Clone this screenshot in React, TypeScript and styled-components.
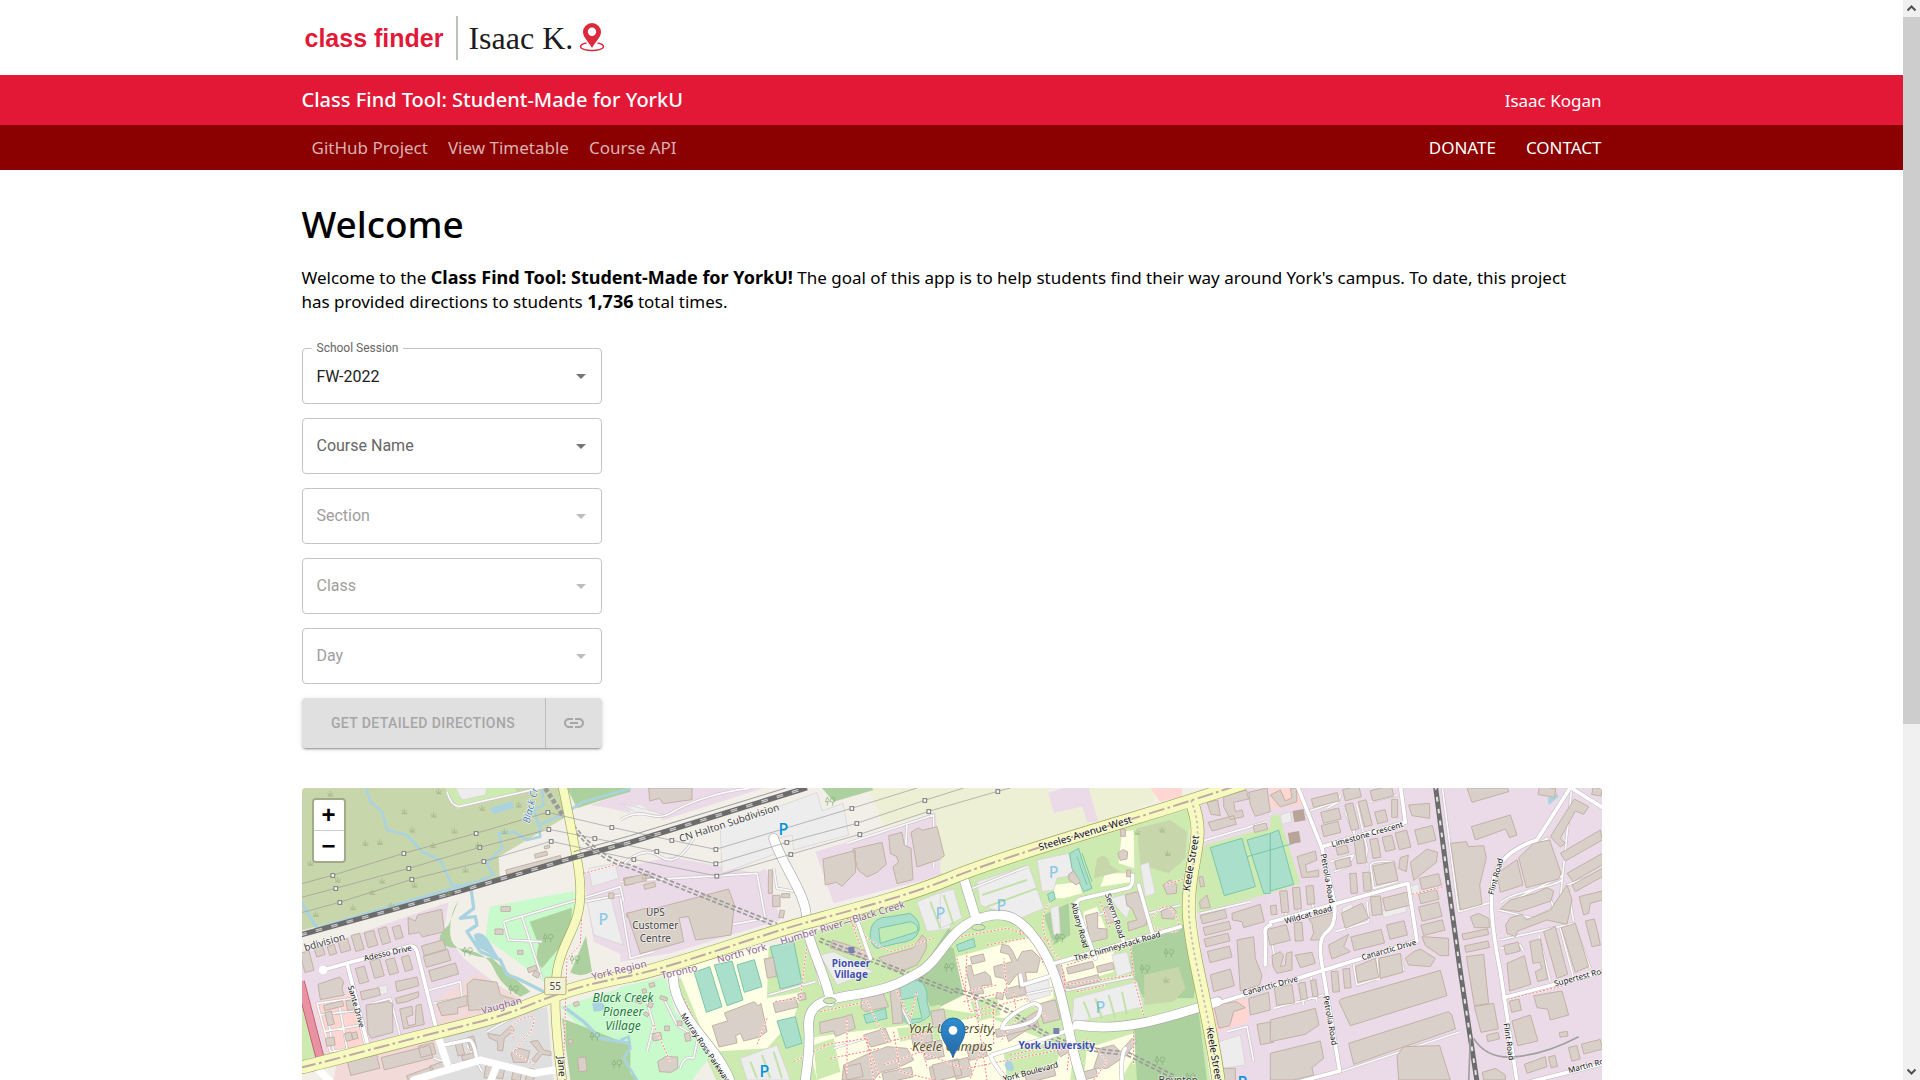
import React from "react";
import styled, { createGlobalStyle } from "styled-components";

const Global = createGlobalStyle`
  *, *::before, *::after { box-sizing: border-box; }
  body { margin: 0; background: #fff; color: #000; font-family: "Noto Sans", "Open Sans", sans-serif; }
`;

const Shell = styled.div`
  display: grid;
  grid-template-columns: minmax(0, 1fr) 17px;
  height: 100vh;
`;
const Page = styled.div`
  overflow: hidden;
`;
const Container = styled.div`
  display: flex;
  align-items: center;
  width: calc(100% - 32px);
  max-width: 1300px;
  height: 100%;
  margin: 0 auto;
`;

/* Scroll bar */
const ScrollTrack = styled.div`
  display: flex;
  flex-direction: column;
  background: #f0f0f0;
`;
const ScrollThumb = styled.div`
  height: 707px;
  margin-bottom: auto;
  background: #cdcdcd;
`;
const ScrollArrow = styled.svg`
  width: 17px;
  height: 17px;
  fill: none;
  stroke: #505050;
  stroke-width: 2;
`;

/* Header */
const LogoBar = styled.header`
  height: 75px;
`;
const Logo = styled.a`
  display: flex;
  align-items: center;
  gap: 10px;
  padding-left: 3px;
  color: #1c1c1c;
  text-decoration: none;
`;
const LogoName = styled.span`
  padding-right: 3px;
  color: #e31837;
  font: bold 25px/32px "Liberation Sans", Arial, sans-serif;
`;
const LogoRule = styled.span`
  width: 2px;
  height: 44px;
  background: #b9c4b6;
`;
const LogoAuthor = styled.span`
  font: 32px/36px "Liberation Serif", "Times New Roman", serif;
`;
const LogoPin = styled.svg`
  width: 26px;
  height: 30px;
  margin-left: -4px;
`;
const TitleBar = styled.div`
  height: 50px;
  background: #e31837;
  color: #fff;
`;
const SiteTitle = styled.span`
  margin-right: auto;
  font-size: 20px;
  font-weight: 500;
  line-height: 28px;
`;
const Owner = styled.a`
  color: #fff;
  font-size: 17px;
  text-decoration: none;
`;
const NavBar = styled.nav`
  height: 45px;
  background: #8b0000;
`;
const NavGroup = styled.div<{ $end?: boolean }>`
  display: flex;
  gap: ${(p) => (p.$end ? 30 : 20)}px;
  ${(p) => (p.$end ? "margin-left: auto;" : "padding-left: 10px;")}
`;
const NavLink = styled.a<{ $bright?: boolean }>`
  color: ${(p) => (p.$bright ? "#fff" : "#dcb0b0")};
  font-size: 17px;
  line-height: 24px;
  text-decoration: none;
`;

/* Content */
const Main = styled.main`
  width: calc(100% - 32px);
  max-width: 1300px;
  margin: 0 auto;
  padding-top: 30px;
`;
const Heading = styled.h1`
  margin: 0;
  font-size: 37px;
  font-weight: 500;
  line-height: 48px;
`;
const Intro = styled.p`
  margin: 18px 0 34px;
  padding-right: 24px;
  font-size: 17px;
  line-height: 24px;
  b { font-size: 18px; line-height: 20px; }
`;
const Form = styled.form`
  display: flex;
  flex-direction: column;
  gap: 14px;
  width: 300px;
  font-family: Roboto, sans-serif;
`;
const Field = styled.div`
  position: relative;
  height: 56px;
`;
const Select = styled.select`
  width: 100%;
  height: 100%;
  padding: 2px 40px 0 14px;
  border: 1px solid #c4c4c4;
  border-radius: 4px;
  appearance: none;
  background: #fff;
  color: #212121;
  font: 16px/24px Roboto, sans-serif;
  opacity: 1;
`;
const FieldLabel = styled.label<{ $floating?: boolean; $off?: boolean }>`
  position: absolute;
  top: ${(p) => (p.$floating ? -8 : 16)}px;
  left: ${(p) => (p.$floating ? 10 : 15)}px;
  padding: 0 ${(p) => (p.$floating ? 5 : 0)}px;
  background: #fff;
  color: ${(p) => (p.$off ? "#9e9e9e" : "#666")};
  font-size: ${(p) => (p.$floating ? 12 : 16)}px;
  line-height: ${(p) => (p.$floating ? 16 : 24)}px;
  pointer-events: none;
`;
const Caret = styled.svg<{ $off?: boolean }>`
  position: absolute;
  top: 16px;
  right: 9px;
  width: 24px;
  height: 24px;
  fill: ${(p) => (p.$off ? "#bdbdbd" : "#757575")};
  pointer-events: none;
`;
const ButtonGroup = styled.div`
  display: flex;
  height: 50px;
  border-radius: 4px;
  background: #e0e0e0;
  box-shadow: 0 3px 1px -2px rgba(0,0,0,.2), 0 2px 2px 0 rgba(0,0,0,.14), 0 1px 5px 0 rgba(0,0,0,.12);
`;
const GroupButton = styled.button<{ $wide?: boolean }>`
  display: flex;
  align-items: center;
  justify-content: center;
  flex: ${(p) => (p.$wide ? "1" : "0 0 56px")};
  padding: 0;
  border: 0;
  border-right: ${(p) => (p.$wide ? "1px solid #bdbdbd" : "0")};
  background: none;
  color: #a6a6a6;
  font: 500 14px/24px Roboto, sans-serif;
  letter-spacing: 0.02857em;
  text-transform: uppercase;
  svg { width: 24px; height: 24px; fill: currentColor; }
`;

/* Map */
const MapFrame = styled.section`
  position: relative;
  margin-top: 40px;
  border-radius: 4px 4px 0 0;
  overflow: hidden;
`;
const MapDrawing = styled.svg`
  display: block;
  width: 100%;
  height: auto;
  font-family: "Noto Sans", sans-serif;
`;
const ZoomControl = styled.div`
  position: absolute;
  top: 10px;
  left: 10px;
  border: 2px solid rgba(0, 0, 0, 0.2);
  border-radius: 4px;
  background-clip: padding-box;
`;
const ZoomButton = styled.button`
  display: block;
  width: 30px;
  height: 30px;
  padding: 0;
  border: 0;
  border-radius: 2px 2px 0 0;
  background: #fff;
  color: #000;
  font: bold 24px/30px "Liberation Sans", Arial, sans-serif;
  & + & { height: 31px; border-top: 1px solid #ccc; border-radius: 0 0 2px 2px; }
`;

/* The map is drawn in four side-by-side sheets; each layer lists one path per sheet. */
const SHEETS = [0, 960, 1920, 2910];

function Layer({ d, ...rest }: { d: string[] } & Omit<React.SVGProps<SVGGElement>, "d">) {
  return (
    <g {...rest}>
      {d.map((path, i) => (path ? <path key={i} d={path} transform={`translate(${SHEETS[i]})`} /> : null))}
    </g>
  );
}

/* centre x, centre y, width, height, rotation */
type Block = [number, number, number, number, number];
const block = ([cx, cy, w, h, a]: Block) => {
  const r = (a * Math.PI) / 180;
  const c = Math.cos(r);
  const s = Math.sin(r);
  const p = [[-w, -h], [w, -h], [w, h], [-w, h]].map(
    ([x, y]) => `${(cx + (x * c - y * s) / 2).toFixed(1)},${(cy + (x * s + y * c) / 2).toFixed(1)}`
  );
  return `M${p.join("L")}Z`;
};
const blocks = (list: Block[]) => list.map(block).join("");

const BUILDINGS = [
  "M323,398L345,408 352,390 424,373 432,440 366,456 357,442 325,448Z M53,598L118,576 130,590 125,612 132,630 60,644Z M500,598L520,582 590,592 600,630 660,648 600,662 588,672 505,676Z M410,655L500,632 500,662 472,668 472,686 424,692Z M197,660L262,650 276,655 278,742 213,760 203,745Z M298,672L335,664 338,690 318,696 324,722 345,718 347,662 362,657 372,718 310,732Z M562,745L600,752 632,722 642,736 612,760 607,798 592,796 592,770 566,758Z M690,770L712,766 730,795 752,800 752,812 725,808 706,832 695,824 715,800Z M632,805L655,790 688,798 680,832 640,832Z M180,620L236,608 240,630 185,645Z M285,590L350,576 356,602 290,620Z M285,640L355,620 355,636 320,650 290,656Z" +
    blocks([[20,530,28,60,-14],[58,500,26,26,-16],[95,495,22,28,-16],[132,482,30,36,-16],[172,472,26,50,-16],[212,462,30,46,-16],[252,452,26,48,-16],[292,442,24,38,-16],[185,570,28,48,-16],[230,550,30,54,-16],[275,544,28,46,-16],[320,535,24,44,-16],[400,488,68,30,-16],[410,520,76,34,-16],[430,562,84,34,-16],[100,662,58,16,-14],[150,660,22,30,-10],[88,700,20,40,-14],[90,770,26,24,-10],[145,755,20,24,-14],[163,752,16,20,-14],[320,818,150,38,-14],[190,840,90,42,-14],[380,795,46,34,-14],[420,845,60,24,-20],[360,868,80,20,-20],[478,790,20,42,-14],[515,775,20,40,-14],[505,815,40,16,-14],[565,860,22,40,10],[600,860,22,40,10],[650,866,26,40,10],[690,870,24,38,10],[700,240,170,14,-15],[722,209,38,12,-15],[740,186,16,8,-15],[616,372,28,14,0],[596,440,24,16,0],[660,502,16,12,0],[696,552,28,14,-20],[708,568,18,16,30],[933,332,16,16,0],[985,288,28,22,-10],[986,390,14,12,0],[846,838,24,42,-6],[810,770,12,12,0],[828,657,16,12,-20]]),
  "M85,9L215,9 215,44 128,56 118,40 88,48Z M20,385L85,368 98,372 325,312 342,360 332,450 226,465 205,395 176,398 190,470 60,506Z M608,222L705,196 705,262 665,304 648,292 615,300Z M698,192L785,172 798,238 770,262 740,276 712,254Z M805,152L845,142 852,180 872,190 878,284 830,296 818,245 835,232 828,214 810,206Z M872,142L895,128 905,136 950,125 972,212 960,222 890,246Z M276,722L322,708 312,684 402,650 414,662 422,655 440,740 418,756 370,768 360,745 346,752 350,774 296,786Z M598,712L668,696 695,688 705,730 646,755 640,738 600,746Z M775,518L880,488 905,450 918,462 918,490 905,515 890,540 840,560 800,545Z M112,830L135,815 172,816 172,850 152,862 118,860Z M724,640L785,618 805,665 735,680 722,668Z M730,750L795,730 812,770 752,786Z M670,840L740,808 800,785 860,790 880,825 830,850 780,862 760,885 665,885Z" +
    blocks([[45,284,64,20,-14],[78,275,24,10,-14],[88,302,34,14,-14],[450,290,12,70,0],[468,348,22,34,0],[484,387,14,22,10],[496,332,24,12,0],[450,548,28,58,-10],[496,660,70,30,-14],[545,635,22,20,-10],[690,495,120,24,18],[95,600,16,12,-15],[72,618,12,12,-15],[55,648,20,12,20],[90,660,14,14,20],[130,640,22,10,20],[160,620,16,12,30],[202,756,16,24,-10],[110,755,26,22,-10],[140,730,14,14,0],[178,715,14,14,0],[78,688,14,10,30],[828,660,30,110,-5],[955,700,40,50,-10],[938,795,60,50,-10],[905,760,60,34,-12],[832,870,90,30,-12],[700,860,50,40,-12],[960,860,60,40,-12]]),
  "M160,545L215,530 205,508 180,502 185,478 205,482 218,500 230,528 245,500 275,495 300,520 290,562 255,562 262,600 238,610 232,565 205,600 190,580 165,575Z M75,545L92,540 100,572 135,560 150,575 155,600 125,602 130,625 95,630Z M800,52L832,45 840,92 812,88Z M850,35L918,15 925,42 880,52 885,80 905,75 910,95 870,104 850,65Z M925,22L980,9 990,80 945,94 930,60Z M803,112L880,92 888,118 815,138Z M875,385L960,358 972,410 910,428 905,410 876,405Z M890,465L940,455 945,520 965,570 958,600 900,618Z M810,570L870,552 882,602 820,620Z M820,660L888,650 915,668 880,680 868,722 836,730Z M925,640L985,622 990,675 930,690Z M435,392L472,382 472,430 500,432 500,460 450,472Z M555,330L592,320 620,390 618,420 565,438 562,412 590,405 575,370 560,362Z M532,205L548,194 562,200 560,222 540,226Z M668,300L690,285 710,300 708,325 680,328Z M662,378L695,365 708,380 700,402 665,400Z M195,740L270,690 300,672 290,715 205,770Z M385,268L400,258 420,290 408,300 386,285Z M480,790L520,780 540,800 575,760 590,765 560,810 500,850 460,850Z M778,350L800,330 810,368 780,370Z" +
    blocks([[548,143,14,22,0],[565,265,12,20,0],[784,290,12,30,-10],[820,395,76,26,-14],[830,430,80,24,-14],[830,465,74,24,-14],[838,508,68,34,-14],[960,128,40,20,-14],[420,548,80,20,-14],[495,548,50,20,-14],[430,590,95,20,-14],[362,575,20,75,-14],[112,522,40,22,-14],[225,620,60,30,-14],[327,680,52,60,-14],[178,633,22,18,10],[230,730,130,24,-14],[110,800,55,40,-14],[20,855,80,50,-14],[65,850,50,55,-14],[505,390,22,50,-14],[375,790,50,30,-30],[300,870,90,26,-14],[440,870,60,24,-14],[975,745,40,62,-10],[860,870,50,40,0]]),
  "M0,30L30,15 45,48 65,38 60,10 78,9 80,50 30,66Z M80,215L135,198 140,225 105,240 110,262 145,255 145,275 95,278Z M420,232L470,192 502,202 498,232 430,286Z M390,218L414,210 408,260 385,250Z M415,60L478,55 478,100 425,92Z M590,9L712,9 715,20 605,52Z M603,125L720,90 740,150 718,158 705,132 615,165Z M541,175L588,170 595,185 640,182 648,218 628,300 635,358 570,375Z M680,265L740,224 758,300 690,322Z M745,218L790,175 838,165 872,265 865,282 768,308Z M690,372L720,345 795,325 830,308 850,318 842,348 745,380Z M706,420L720,398 755,388 768,405 840,375 890,300 905,345 890,418 830,405 742,438 735,455 710,445Z M840,155L912,42 955,65 940,88 915,78 870,160 885,175 870,186Z M870,205L990,135 996,165 885,228Z M890,265L996,205 996,240 908,290Z M905,300L996,250 996,275 915,320Z M926,335L996,318 996,345 960,355 955,385 940,390Z M5,512L30,500 40,512 30,545 45,540 48,505 65,500 65,555 20,565 8,545Z M75,510L125,502 135,535 90,548Z M115,402L188,382 185,415 150,465 120,465 130,445 125,415Z M175,480L235,448 220,485 240,500 185,522 178,500Z M213,385L275,355 290,385 295,400 225,430Z M212,642L510,556 530,632 240,722 206,650Z M235,775L535,680 545,690 555,732 250,838Z M0,705L135,670 146,720 105,748 0,770Z M0,805L150,768 160,820 125,848 130,870 70,885 0,885Z M380,812L400,785 508,782 540,885 385,885Z M455,455L535,460 535,512 510,512 465,482Z M405,520L430,500 450,492 495,520 480,545 415,540Z M588,515L640,508 655,655 612,662Z M612,665L670,655 684,732 632,742Z M600,395L625,385 655,400 658,428 612,428Z M778,470L810,462 832,582 802,590 795,560 815,550 808,532 788,535Z M820,440L855,425 892,568 860,580Z M873,428L915,415 955,545 915,562Z M710,535L762,512 782,598 718,618Z M725,708L780,690 803,768 742,782Z M790,632L875,618 895,690 840,705 832,672 800,668Z M762,838L825,815 830,845 770,865Z M636,862L675,850 705,870 705,885 640,885Z M255,545L315,520 325,578 262,592Z M326,520L390,505 398,562 330,580Z M945,408L972,402 982,440 990,480 965,485Z" +
    blocks([[165,45,80,26,-14],[182,92,55,34,-14],[182,132,52,34,-14],[245,95,24,80,-14],[285,85,24,78,-14],[333,95,32,36,-14],[373,70,18,54,0],[245,25,50,34,-14],[335,25,65,32,-14],[465,150,55,45,-14],[398,165,36,52,-14],[355,175,30,44,-14],[315,190,24,58,-10],[270,200,28,70,-8],[216,195,34,24,-14],[218,235,46,26,-14],[250,295,20,60,-4],[290,290,22,56,-4],[345,265,65,58,-12],[480,290,60,35,-14],[475,335,56,30,-14],[480,380,62,44,-14],[488,428,66,32,-14],[318,362,30,56,-6],[378,350,76,40,-14],[292,465,94,42,-14],[380,435,54,44,-14],[42,350,22,65,-5],[80,340,22,65,-5],[120,330,22,55,-5],[10,375,18,28,-5],[85,440,24,56,-4],[24,450,62,48,-14],[195,590,20,62,-5],[230,580,20,58,-5],[42,630,54,55,-8],[98,618,20,50,-8],[132,610,16,50,-8],[615,448,78,18,-12],[620,485,72,20,-12],[735,662,30,34,-12],[668,756,36,20,-14],[880,748,24,14,-8],[848,830,20,34,-14],[912,805,26,42,-14],[965,785,58,30,-14],[725,490,44,28,-14],[830,20,50,26,10],[980,20,28,22,10]]),
];

const SCRUB: number[][] = [[90,27],[415,20],[545,70],[655,60],[312,80],[400,90],[462,138],[335,135],[195,175],[238,172],[398,182],[495,255],[30,235],[112,285],[245,288],[342,300],[445,325],[215,322],[46,388],[158,368],[272,362],[612,140],[532,180],[2510,142],[2585,135],[2602,205],[2597,585]];
const PYLONS: number[][] = [[97,271],[310,205],[527,145],[742,82],[934,127],[106,310],[325,250],[538,187],[745,133],[883,160],[118,352],[334,283],[550,229],[752,169],[1114,166],[1246,193],[1654,70],[1069,199],[1246,236],[1459,172],[1669,115],[1873,46],[1000,223],[1249,273],[1471,208],[1678,148],[1885,79],[2092,19]];
const TREES: number[][] = [[742,460],[822,525],[500,500],[638,615],[882,755],[948,838],[1588,50],[2277,460],[2604,505],[2532,553],[2577,828],[1945,548],[2668,878]];

const RAIL_HALTON = "M0,450L480,318 820,218 990,172 1520,8";
const RAIL_EAST = "M3405,0L3440,270 3480,560 3530,890";
const STEELES = "M0,848C60,835 220,790 400,745S600,695 700,655S860,598 990,572S1380,450 1520,412S1830,330 1950,280S2400,130 2500,100S2740,25 2830,-5";
const KEELE = "M2672,45C2705,130 2690,170 2675,260S2660,400 2690,545S2740,780 2755,890";
const JANE = "M786,0C800,60 812,130 824,190S850,330 830,395S780,490 770,560S768,760 786,890";
const WHITE_MAJOR = "M1420,160C1445,240 1520,330 1518,400S1580,570 1590,650M2752,650C2620,690 2480,745 2330,720M1515,885C1520,840 1530,800 1525,730S1560,645 1660,630S1800,595 1860,560S1940,440 2025,405S2165,390 2230,500S2300,760 2345,890M1990,280L2030,410M1118,570C1120,620 1135,650 1160,695S1260,810 1290,890";
const WHITE_ROADS = "M68,555L140,535 330,483Q345,483 350,500L410,740 440,840M140,535L205,790M430,780L505,765Q520,765 530,825M2640,425L2245,540M2330,360Q2325,345 2350,340L2480,310Q2500,305 2497,270M2515,300L2555,440M2325,355L2385,520M2420,330L2470,470M2752,655L3350,468 3323,295 2910,412M2990,0L3065,190 3102,350Q3110,420 3080,440T3065,540L3118,858 2960,900M3065,185L3315,112 3300,0M3815,0L3710,165Q3600,200 3580,280T3600,560L3650,890M3610,638L3910,560M3690,890L3910,835M3815,10L3910,70M2895,540V450Q2890,425 2910,420M2115,880Q2060,810 2075,810L2250,755 2345,720M2105,730Q2115,690 2200,655Q2230,660 2215,690T2110,730M2160,570L2165,600 2245,575M2465,885Q2460,810 2475,790M1665,390L1710,520";
const SERVICE = "M440,20Q450,60 475,65L760,0M855,350L960,330M610,410L880,330 960,305 970,350M610,410L625,465 725,470M665,395L725,580M50,655L160,640 195,785 90,800ZM60,690L180,675M70,740L180,720M75,655L100,800M115,650L140,790M215,655L270,640 300,755 225,780M370,620L480,590 485,640 400,655M560,740L650,690M400,820L490,850M500,780L545,860M960,105C1030,60 1060,115 1110,85S1250,20 1350,10M960,290L1370,265 1395,400 1180,440M965,240Q1030,180 1080,215T1180,160M960,340L990,520 1060,500M1420,250L1430,310 1490,320M1640,175L1900,90 1900,250M1820,120L1810,290M1405,630L1545,590M1530,480L1560,600M1770,600L1830,720M1600,790L1710,755M1090,640L1130,720 1210,770M1040,650L1060,720 1040,800M1140,850Q1150,810 1180,820L1190,770M1990,320L2180,245M2010,560L2040,700M2120,640L2260,610M2280,620L2500,575M2365,400L2420,380M2525,390L2640,360M2700,385L2850,350M2700,170L2900,110M2780,740L2840,725 2860,830M2910,450L2930,550M3080,70L3115,50 3120,30M3020,80L3110,50M3135,80L3200,240M3210,50L3290,30M3150,90L3180,220Q3200,230 3200,190L3170,60M3100,260L3140,245 3160,210 3090,230M3210,240Q3220,225 3280,230L3290,290 3220,310ZM3200,350L3205,410 3105,440M2940,320L2960,400M2980,310L3000,390M3020,300L3040,370M3160,540L3170,600 3310,555 3300,510M3230,520L3235,585M2990,575L3010,660M3030,570L3050,650M2920,670L3070,630M3425,0L3475,380 3580,350M3600,355C3620,330 3680,320 3750,300S3770,280 3750,210L3690,190 3740,160 3780,275 3650,340M3595,375L3700,400 3760,370 3740,310M3600,465L3820,415 3870,550M3715,450L3750,590M3780,430L3820,580M3600,490L3660,480 3670,500M3820,410L3800,300 3910,260M3815,0L3780,340M3120,860L3480,740";
const FOOTPATHS = "M850,265L960,235M850,260L840,480 800,520 790,830M200,790L560,700 700,660M640,760Q620,720 670,700T690,740L640,800 700,840M1540,410L1650,400 1700,540M1560,680L1700,650 1760,770 1900,740M1640,400Q1700,470 1770,500L1900,460M1570,780L1700,760 1720,885M1480,830L1580,780M1150,640L1210,760 1300,885M1060,720L1110,830M1950,460L2120,430 2260,470M1970,520L2010,680 2180,640M1990,650L2120,620 2110,520M2250,350Q2200,420 2260,500T2250,620M2290,600L2500,570 2490,480M2300,540L2520,470M2500,580L2530,690M2020,620L2060,885M2130,810L2310,770 2300,860M2000,850L2300,790M2400,350L2430,430M2555,400Q2600,330 2630,400T2545,420M2590,300L2660,280M3325,330L3430,305M3610,650L3620,700M3610,645L3800,600M2500,740L2500,840M1830,790L1990,850M1850,620L1830,700 1780,600M1690,750L1740,880M1750,840L1920,780M1640,700L1640,870M1590,820L1740,790M1780,740L1800,860 1900,885M1860,740L1880,850M2000,500L1995,620 2090,600M2060,480L2200,455 2230,540M2140,620L2150,700 2100,770M2180,640L2240,700M2080,650L2080,780M2000,700L2090,680M2010,880L2050,770M2330,620L2420,600M2290,560L2295,620M1520,480L1500,640 1420,650M1400,700L1370,780M2360,760L2420,830 2380,885M2160,400V450";
const GREY_SUBWAY = "M820,120Q900,220 990,240L1430,415M1560,460L1960,615M1965,610Q2100,650 2200,720T2480,800L2620,870";

type Kind = "street" | "avenue" | "admin" | "park" | "campus" | "transit" | "place" | "parking";
const LABEL_STYLE: Record<Kind, [string, number]> = {
  street: ["#111", 24],
  avenue: ["#111", 30],
  admin: ["#8d618b", 30],
  park: ["#1b7a3c", 36],
  campus: ["#5a5325", 39],
  transit: ["#3f4fae", 30],
  place: ["#444", 30],
  parking: ["#0092da", 48],
};
const Label = styled.text<{ $kind: Kind }>`
  fill: ${(p) => LABEL_STYLE[p.$kind][0]};
  font-size: ${(p) => LABEL_STYLE[p.$kind][1]}px;
  font-style: ${(p) => (p.$kind === "park" || p.$kind === "campus" ? "italic" : "normal")};
  font-weight: ${(p) => (p.$kind === "transit" ? 700 : p.$kind === "parking" ? 500 : 400)};
  stroke: rgba(255, 255, 255, 0.6);
  stroke-width: ${(p) => (p.$kind === "parking" ? 0 : 5)}px;
  stroke-linejoin: round;
  paint-order: stroke;
  text-anchor: middle;
  dominant-baseline: central;
`;

const LABELS: [string, number, number, number, Kind][] = [
  ["Adesso Drive", 262, 502, -13, "street"], ["Sante Drive", 170, 664, 74, "street"], ["bdivision", 72, 470, -16, "place"],
  ["Vaughan", 603, 660, -15, "admin"], ["York Region", 956, 554, -14, "admin"], ["Toronto", 1136, 558, -13, "admin"],
  ["North York", 1324, 503, -15, "admin"], ["Humber River—Black Creek", 1626, 412, -17, "admin"],
  ["CN Halton Subdivision", 1286, 112, -18, "place"], ["UPS", 1065, 381, 0, "place"], ["Customer", 1065, 419, 0, "place"], ["Centre", 1065, 458, 0, "place"],
  ["Black Creek", 968, 636, 0, "park"], ["Pioneer", 968, 678, 0, "park"], ["Village", 968, 721, 0, "park"],
  ["Pioneer", 1652, 533, 0, "transit"], ["Village", 1652, 568, 0, "transit"], ["York University", 2269, 779, 0, "transit"],
  ["York University,", 1956, 730, 0, "campus"], ["Keele Campus", 1956, 782, 0, "campus"],
  ["Murray Ross Parkway", 1216, 786, 56, "street"], ["Jane Street", 789, 890, 86, "avenue"],
  ["Steeles Avenue West", 2354, 143, -17, "avenue"], ["Keele Street", 2670, 234, -80, "avenue"], ["Keele Street", 2744, 810, 80, "avenue"],
  ["Albany Road", 2340, 420, 74, "street"], ["Severn Road", 2446, 392, 72, "street"], ["The Chimneystack Road", 2450, 482, -16, "street"],
  ["York Boulevard", 2190, 858, -15, "street"], ["Boynton", 2634, 884, 0, "place"],
  ["Limestone Crescent", 3200, 146, -16, "street"], ["Petrolia Road", 3084, 280, 80, "street"], ["Petrolia Road", 3092, 706, 80, "street"],
  ["Wildcat Road", 3023, 387, -16, "street"], ["Canarctic Drive", 3265, 492, -16, "street"], ["Canarctic Drive", 2909, 600, -15, "street"],
  ["Flint Road", 3584, 274, -75, "street"], ["Flint Road", 3628, 770, 82, "street"], ["Supertest Road", 3845, 572, -15, "street"], ["Martin Ross", 3868, 837, -15, "street"],
  ["P", 1449, 132, 0, "parking"], ["P", 1392, 858, 0, "parking"], ["P", 2826, 892, 0, "parking"],
];
const FADED_P: number[][] = [[909,402],[1920,384],[2260,262],[2103,360],[2400,666]];

function CampusMap() {
  return (
    <MapDrawing viewBox="5 9 3900 876" role="img" aria-label="Map of York University, Keele Campus">
      <rect x="0" y="0" width="3910" height="890" fill="#f2efe9" />
      <Layer fill="#ebdbe8" d={[
        "M0,505L445,352 430,440 490,520 540,560 660,650 400,740 0,850ZM850,265L990,230V520L880,470ZM870,60L990,20V85L930,70Z",
        "M0,9H430L240,70 130,105 60,60 0,70ZM0,250L150,215 410,265 435,250 480,405 150,505 0,530ZM585,200L800,135 945,80 990,200V265L640,355Z",
        "M320,25L370,9H445L475,110 440,112 425,65 340,85ZM770,20L990,0V890H830L770,400 785,250Z",
        "M0,0H1000V890H0Z"]} />
      <Layer fill="#c8d7ab" d={["M0,0H790L790,100 595,215 598,275 0,438Z", "", "", ""]} />
      <Layer fill="#eef0d5" d={["", "M745,9H990V265L965,275 945,80 790,125Z", "M0,9H320L340,85 425,65 440,112 475,110 445,9H650L640,50 540,90 0,265Z", ""]} />
      <Layer fill="#e0dfdf" d={["M140,850L400,760 740,665 760,890H140Z", "", "", ""]} />
      <Layer fill="#f2dad9" d={["M400,650L530,565 660,640 640,680 420,735ZM110,830L410,760 400,885H100Z", "", "", ""]} />
      <Layer fill="#ffd6d1" d={["M40,655L160,625 205,780 85,815Z", "", "M630,9H725V35L660,50ZM800,645L920,640 925,710 830,740Z", "M0,9H95L100,60 0,70Z"]} />
      <Layer fill="#cdebb0" d={[
        "M430,0L640,0 650,25 470,72ZM0,600L50,810 0,830Z",
        "M150,590L560,450 745,370 990,290V890H290Z",
        "M0,300L750,70 745,240 730,420 780,650 810,890H0Z",
        "M0,92L25,88 90,295 0,325Z"]} />
      <Layer fill="#cdebb0" d={["", "", "M795,180L990,125V325L830,370 770,385 765,250Z", ""]} />
      <Layer fill="#c8facc" d={["M568,365L822,318 825,390 770,560 740,600 715,575 555,460ZM780,665L990,600V790Q900,790 850,740Z", "M0,605L135,575 165,680 280,800 215,885H0Z", "", ""]} />
      <Layer fill="#ffffe5" d={["", "M170,550L445,480 440,640 545,620 520,700 440,790 270,800ZM560,760L700,740 860,720 990,790V885H590Z", "M35,520L270,455 330,530 340,640 190,700 0,670ZM340,300L420,290 425,325 370,340 342,340ZM495,265L560,265 580,290 480,305ZM545,140L580,135 582,250 535,235ZM350,540L520,500 520,560 360,610ZM0,720L130,690 400,800 390,885H0ZM430,380L470,365 500,440 470,470 430,450ZM440,790L580,745 590,800 540,885H430Z", ""]} />
      <Layer fill="#cdebb0" d={["", "M580,780L640,760 660,860 590,885ZM830,730L880,725 890,760 840,770Z", "M190,800L370,765 350,830 200,880ZM90,650L170,635 180,690 110,710Z", ""]} />
      <Layer fill="#add19e" d={[
        "M475,345Q445,390 450,450T575,520L690,620 660,635Q600,600 580,550T470,490T445,420ZM688,410L815,368 810,450 725,550Q700,530 715,480ZM857,453L875,560Q840,580 810,562ZM785,700L990,780V885H810ZM800,9H990V20L890,50 830,70Z",
        "M605,9H755L760,15 640,50ZM890,575L990,420V650L930,665ZM0,840L60,890H0Z",
        "M0,480L40,490 70,630 0,665ZM310,390L385,355 390,450 340,480ZM570,470L730,418 770,560 760,640 610,640 570,560ZM580,730L775,680 800,885H590Z", ""]} />
      <Layer fill="#c8d7ab" d={["", "", "M590,130L690,105 740,140 735,220 685,265 600,240ZM612,570L715,545 735,610 700,650 612,660ZM470,220Q500,200 510,240L540,260 460,280Z", ""]} />
      <Layer fill="#ededed" stroke="#d6cfd0" strokeWidth="2" d={[
        "M465,9H560L555,30 485,45ZM865,250L945,235 955,280 875,305ZM860,350L930,330 968,480 880,450ZM230,605L260,600 262,625 235,632Z",
        "M300,130L590,22 605,78 668,55 685,150 520,195 515,150 450,165 470,205 305,265ZM360,820L470,780 510,885H380ZM890,350L990,310V430L920,440ZM600,510L640,500 760,560 650,600ZM0,55L105,80 140,95 50,85Z",
        "M290,225L385,205 400,270 350,280 340,315 305,320ZM110,290L265,240 310,370 240,400 120,360ZM0,325L40,312 65,400 0,430ZM400,640L590,590 610,665 395,715ZM330,370L355,360 360,445 340,450ZM600,240L625,232 645,325 615,335ZM515,510L560,500 575,560 530,575ZM255,600L325,585 330,630 260,650ZM836,770L900,750 915,840 850,850ZM510,340L585,320 560,400 540,380Z",
        "M30,90L60,80 65,110 35,118ZM215,370L245,355 248,380 220,392ZM335,378L405,360 410,380 340,398ZM420,305L445,295 447,325 425,330Z"]} />
      <path d="M568,70L635,48 642,68 580,88ZM520,450Q545,430 570,475T600,525Q560,500 530,485ZM875,655Q900,640 912,660T880,680ZM2112,840Q2125,810 2137,838T2120,855ZM3742,40L3770,25 3775,35 3745,60Z" fill="#aad3df" />
      <g fill="none" stroke="#aad3df" strokeWidth="8" strokeLinejoin="round">
        <path d="M195,0L210,50 245,80 260,135 320,150 365,200 420,225 455,300 500,302 580,270 560,235 605,190 595,145 640,140 680,165 720,155 715,120 785,90 850,50 990,10" />
        <path d="M5,355L50,430 510,295 520,370 480,400 525,395 530,420 500,440 540,500 600,525 620,570 650,580 740,625M790,665L850,710 900,760 990,775" strokeWidth="10" />
        <path d="M725,9L730,60 700,75 720,130M960,765L985,755 990,790 970,820 1010,885" />
      </g>
      <Layer fill="#aae0cb" stroke="#7cc5aa" strokeWidth="3" d={["",
        "M222,562L268,545 305,665 258,682ZM282,540L335,528 368,645 320,662ZM350,540L402,524 425,605 372,622ZM450,485L520,470 545,595 480,612ZM470,708L525,695 545,775 497,790ZM750,440Q755,395 810,395L870,385Q905,410 895,440T830,475L770,490Q745,475 750,440ZM822,650Q815,590 870,585T920,650L930,690Q900,720 860,715Q835,700 822,650ZM730,690L795,670 800,700 738,715Z",
        "M388,205L415,190 425,225 455,310 430,320 395,250ZM322,328L340,320 345,342 328,352ZM48,480L100,460 105,485 55,500ZM810,188L905,160 945,305 852,332ZM920,165L990,145V325L970,325Z",
        "M0,145L25,135 70,298 0,318Z"]} />
      <path d="M1735,430L1830,410Q1860,420 1850,440L1740,475Z M1800,645L1850,635 1865,700 1815,705Z" fill="#c0ebb4" stroke="#7cc5aa" strokeWidth="3" />
      <path d="M2840,215L2980,175M2330,215L2360,300M2345,205L2375,290" stroke="#7cc5aa" strokeWidth="3" fill="none" />
      <path d="M1890,350L1920,430M1930,330L1960,420M1350,830L1370,880M1385,810L1410,880M1420,800L1445,880M2045,330L2180,285M2060,365L2210,310M2350,650L2370,700M2385,640L2405,700M2425,630L2445,700M2465,620L2480,690" stroke="#c3e2a8" strokeWidth="6" fill="none" />

      <g fill="none" strokeLinejoin="round">
        <path d={SERVICE} stroke="#c9c3c6" strokeWidth="9" />
        <path d={SERVICE} stroke="#fbfafa" strokeWidth="5" />
      </g>
      <Layer d={BUILDINGS} fill="#d9d0c9" stroke="#c3b1a6" strokeWidth="3" />
      <path d={blocks([[2996, 92, 34, 34, -10], [2982, 158, 34, 34, -10]])} fill="#b8a598" />
      <path d={FOOTPATHS} fill="none" stroke="#fff" strokeWidth="6" opacity="0.6" />
      <path d={FOOTPATHS} fill="none" stroke="#fa8072" strokeWidth="3" strokeDasharray="6 5" />
      <g fill="none" stroke="#9a9a9a" strokeWidth="5" strokeDasharray="13 7">
        <path d={GREY_SUBWAY} />
        <path d={GREY_SUBWAY} transform="translate(-4 9)" />
        <path d="M735,10L790,95" strokeWidth="14" />
      </g>

      <g fill="none" strokeLinejoin="round" strokeLinecap="round">
        <path d={WHITE_ROADS} stroke="#bfb8ba" strokeWidth="14" />
        <path d={WHITE_MAJOR} stroke="#aaa" strokeWidth="31" />
        <path d={WHITE_ROADS} stroke="#fff" strokeWidth="11" />
        <path d={WHITE_MAJOR} stroke="#fff" strokeWidth="27" />
        <path d="M50,850L90,890M410,745L440,835M340,885L540,825 700,865 790,850M590,840L570,890" stroke="#fff" strokeWidth="22" />
      </g>
      <ellipse cx="1588" cy="647" rx="19" ry="9" fill="#cdebb0" stroke="#aaa" strokeWidth="3" />
      <ellipse cx="2034" cy="427" rx="20" ry="9" fill="#cdebb0" stroke="#aaa" strokeWidth="3" />
      <circle cx="68" cy="555" r="13" fill="#fff" />

      <path d="M0,590L62,830" stroke="#c2576f" strokeWidth="27" />
      <path d="M0,590L62,830" stroke="#e892a2" strokeWidth="22" />

      <g fill="none">
        <path d={JANE} stroke="#a3a55c" strokeWidth="29" />
        <path d={KEELE} stroke="#a3a55c" strokeWidth="41" />
        <path d={STEELES} stroke="#a3a55c" strokeWidth="41" />
        <path d={JANE} stroke="#f7fabf" strokeWidth="25" />
        <path d={KEELE} stroke="#f7fabf" strokeWidth="37" />
        <path d={STEELES} stroke="#f7fabf" strokeWidth="37" />
        <path d={STEELES} stroke="#bfa9a4" strokeWidth="6" strokeDasharray="48 10 8 10" />
        <path d={KEELE} stroke="#c4b7bb" strokeWidth="5" strokeDasharray="8 8" />
      </g>

      <g fill="none">
        <path d="M820,200L990,152 1460,8" stroke="#999" strokeWidth="3" />
        <path d={RAIL_HALTON} stroke="#6c6c6c" strokeWidth="16" />
        <path d={RAIL_HALTON} stroke="#d8d8d8" strokeWidth="8" strokeDasharray="20 28" />
        <path d={RAIL_HALTON} stroke="#6c6c6c" strokeWidth="2" />
        <path d={RAIL_EAST} stroke="#6c6c6c" strokeWidth="15" />
        <path d={RAIL_EAST} stroke="#e4e4e4" strokeWidth="6" strokeDasharray="14 22" />
        <path d="M3520,760Q3560,825 3650,815T3835,755M3505,890L3510,760" stroke="#a0a0a0" strokeWidth="5" />
      </g>

      <g fill="none" stroke="#999" strokeWidth="2">
        <path d="M0,297L97,271 310,205 527,145 742,82 934,127 1114,166 1246,193 1654,70 1850,9" />
        <path d="M0,338L106,310 325,250 538,187 745,133 883,160 1069,199 1246,236 1459,172 1669,115 1873,46 1990,9" />
        <path d="M0,384L118,352 334,283 550,229 752,169 1000,223 1249,273 1471,208 1678,148 1885,79 2092,19 2130,9" />
      </g>
      <g fill="#fff" stroke="#777" strokeWidth="3">
        {PYLONS.map(([x, y]) => <rect key={`${x}-${y}`} x={x - 5} y={y - 5} width="11" height="11" />)}
      </g>
      <g fill="none" stroke="#9dae7c" strokeWidth="2">
        {SCRUB.map(([x, y]) => <path key={`${x}-${y}`} d={`M${x - 8},${y + 6}h18M${x},${y + 5}v-14M${x - 2},${y + 5}l-6,-9M${x + 2},${y + 5}l7,-9`} />)}
      </g>
      <g fill="none" stroke="#80aa75" strokeWidth="2">
        {TREES.map(([x, y]) => <path key={`${x}-${y}`} d={`M${x - 7},${y + 12}v-12m-6,0l6,-14 6,14zM${x + 9},${y + 12}v-11m-7,-6a7,7 0 1 0 14,0a7,7 0 1 0 -14,0`} />)}
      </g>

      <rect x="733" y="577" width="64" height="52" rx="5" fill="#f3f1cf" stroke="#b8b57e" strokeWidth="3" />
      <Label $kind="place" x="765" y="604">55</Label>
      <rect x="1644" y="486" width="18" height="18" fill="#7981b0" />
      <rect x="2259" y="729" width="18" height="18" fill="#7981b0" />
      <text x="706" y="42" transform="rotate(-76 706 42)" textAnchor="middle" fontSize="30" fontStyle="italic" fill="#4d80b3" stroke="#fff" strokeWidth="3" paintOrder="stroke">Black Creek</text>
      <g opacity="0.4">
        {FADED_P.map(([x, y]) => <Label key={x} $kind="parking" x={x} y={y}>P</Label>)}
      </g>
      {LABELS.map(([t, x, y, a, kind]) => (
        <Label key={`${t}-${x}-${y}`} $kind={kind} x={x} y={y} transform={a ? `rotate(${a} ${x} ${y})` : undefined}>{t}</Label>
      ))}
      <defs>
        <linearGradient id="pin" x2="0" y2="1">
          <stop stopColor="#2e8dd0" />
          <stop offset="1" stopColor="#2667a6" />
        </linearGradient>
      </defs>
      <path d="M1958,818C1950,790 1922,770 1922,735A36,36 0 0 1 1994,735C1994,770 1966,790 1958,818Z" fill="url(#pin)" stroke="#2a6ba8" strokeWidth="3" />
      <circle cx="1958" cy="736" r="13" fill="#fff" />
    </MapDrawing>
  );
}

function SelectField({ id, label, value, disabled }: { id: string; label: string; value?: string; disabled?: boolean }) {
  return (
    <Field>
      <Select id={id} disabled={disabled} defaultValue={value ?? ""}>
        <option value={value ?? ""}>{value ?? ""}</option>
      </Select>
      <FieldLabel htmlFor={id} $floating={Boolean(value)} $off={disabled}>{label}</FieldLabel>
      <Caret viewBox="0 0 24 24" $off={disabled} aria-hidden="true"><path d="M7 10l5 5 5-5z" /></Caret>
    </Field>
  );
}

export default function App() {
  return (
    <>
      <Global />
      <Shell>
        <Page>
          <LogoBar>
            <Container>
              <Logo href="#home">
                <LogoName>class finder</LogoName>
                <LogoRule />
                <LogoAuthor>Isaac K.</LogoAuthor>
                <LogoPin viewBox="0 0 26 30" aria-hidden="true">
                  <path d="M13 0a9 9 0 0 0-9 9c0 5 5 9 9 16 4-7 9-11 9-16a9 9 0 0 0-9-9zm0 4.500a4.200 4.200 0 1 1 0 8.400 4.200 4.200 0 0 1 0-8.400z" fill="#dc2a3c" fillRule="evenodd" />
                  <path d="M7.500 20C3.500 20.800 1.500 22 1.500 23.500c0 2.300 5 4 11.500 4s11.500-1.700 11.500-4c0-1.500-2-2.700-6-3.500" fill="none" stroke="#dc2a3c" strokeWidth="1.500" />
                </LogoPin>
              </Logo>
            </Container>
          </LogoBar>
          <TitleBar>
            <Container>
              <SiteTitle>Class Find Tool: Student-Made for YorkU</SiteTitle>
              <Owner href="#owner">Isaac Kogan</Owner>
            </Container>
          </TitleBar>
          <NavBar>
            <Container>
              <NavGroup>
                <NavLink href="#github">GitHub Project</NavLink>
                <NavLink href="#timetable">View Timetable</NavLink>
                <NavLink href="#api">Course API</NavLink>
              </NavGroup>
              <NavGroup $end>
                <NavLink href="#donate" $bright>DONATE</NavLink>
                <NavLink href="#contact" $bright>CONTACT</NavLink>
              </NavGroup>
            </Container>
          </NavBar>
          <Main>
            <Heading>Welcome</Heading>
            <Intro>
              Welcome to the <b>Class Find Tool: Student-Made for YorkU!</b> The goal of this app is to help students find
              their way around York's campus. To date, this project has provided directions to students <b>1,736</b> total
              times.
            </Intro>
            <Form onSubmit={(e) => e.preventDefault()}>
              <SelectField id="session" label="School Session" value="FW-2022" />
              <SelectField id="course" label="Course Name" />
              <SelectField id="section" label="Section" disabled />
              <SelectField id="class" label="Class" disabled />
              <SelectField id="day" label="Day" disabled />
              <ButtonGroup>
                <GroupButton type="submit" $wide disabled>Get Detailed Directions</GroupButton>
                <GroupButton type="button" disabled aria-label="Copy link">
                  <svg viewBox="0 0 24 24" aria-hidden="true">
                    <path d="M3.900 12c0-1.710 1.390-3.100 3.100-3.100h4V7H7c-2.760 0-5 2.240-5 5s2.240 5 5 5h4v-1.900H7c-1.710 0-3.100-1.390-3.100-3.100zM8 13h8v-2H8v2zm9-6h-4v1.900h4c1.710 0 3.100 1.390 3.100 3.100s-1.390 3.100-3.100 3.100h-4V17h4c2.760 0 5-2.240 5-5s-2.240-5-5-5z" />
                  </svg>
                </GroupButton>
              </ButtonGroup>
            </Form>
            <MapFrame>
              <CampusMap />
              <ZoomControl>
                <ZoomButton type="button" aria-label="Zoom in">+</ZoomButton>
                <ZoomButton type="button" aria-label="Zoom out">−</ZoomButton>
              </ZoomControl>
            </MapFrame>
          </Main>
        </Page>
        <ScrollTrack aria-hidden="true">
          <ScrollArrow viewBox="0 0 17 17"><path d="M4.500 10.500l4-4 4 4" /></ScrollArrow>
          <ScrollThumb />
          <ScrollArrow viewBox="0 0 17 17"><path d="M4.500 6.500l4 4 4-4" /></ScrollArrow>
        </ScrollTrack>
      </Shell>
    </>
  );
}
